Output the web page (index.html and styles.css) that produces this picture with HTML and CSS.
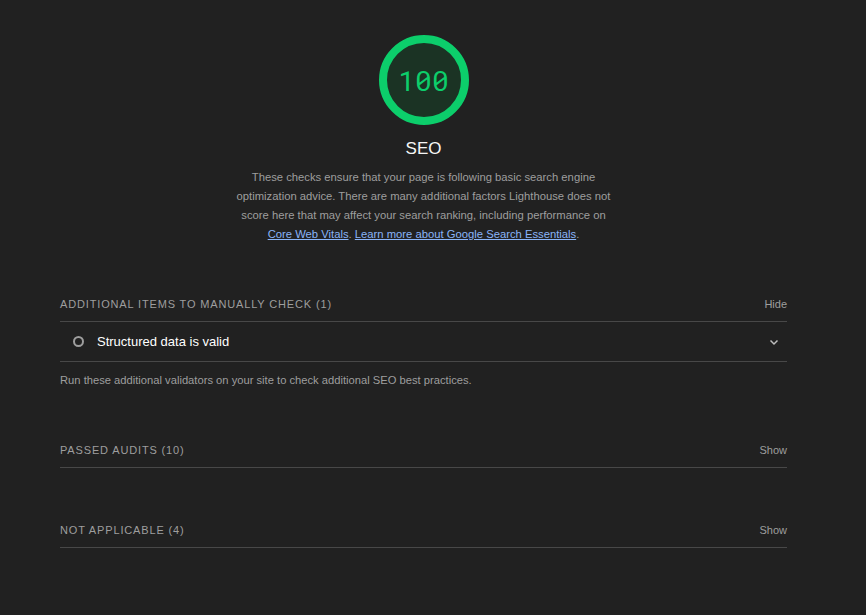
FILE: index.html
```html
<!DOCTYPE html>
<html>
<head>
<meta charset="utf-8">
<link rel="stylesheet" href="styles.css">
</head>
<body>
<div class="page">
  <div class="header">
    <div class="gauge">
      <svg width="96" height="96" viewBox="0 0 96 96">
        <circle cx="48" cy="48" r="41" fill="#1b3324" stroke="#0cce6b" stroke-width="8"/>
      </svg>
      <div class="gauge-num">100</div>
    </div>
    <div class="title">SEO</div>
    <p class="desc">These checks ensure that your page is following basic search engine optimization advice. There are many additional factors Lighthouse does not score here that may affect your search ranking, including performance on <a href="#">Core Web Vitals</a>. <a href="#">Learn more about Google Search Essentials</a>.</p>
  </div>

  <div class="group group-first">
    <div class="group-head">
      <span class="group-title">Additional items to manually check (1)</span>
      <span class="toggle">Hide</span>
    </div>
    <div class="audit">
      <span class="audit-icon"></span>
      <span class="audit-title">Structured data is valid</span>
      <svg class="chev" width="12" height="12" viewBox="0 0 12 12"><path d="M2.5 4.5 L6 8 L9.5 4.5" fill="none" stroke="#bdbdbd" stroke-width="1.5"/></svg>
    </div>
    <div class="group-desc">Run these additional validators on your site to check additional SEO best practices.</div>
  </div>

  <div class="group">
    <div class="group-head">
      <span class="group-title">Passed audits (10)</span>
      <span class="toggle">Show</span>
    </div>
  </div>

  <div class="group">
    <div class="group-head">
      <span class="group-title">Not applicable (4)</span>
      <span class="toggle">Show</span>
    </div>
  </div>
</div>
</body>
</html>
```
FILE: styles.css
```css
html, body {
  margin: 0;
  padding: 0;
  background: #212121;
}
body {
  font-family: "Liberation Sans", Arial, sans-serif;
  color: #e0e0e0;
}
.page {
  width: 727px;
  margin: 0 auto 0 60px;
  padding-top: 32px;
}
.header {
  display: flex;
  flex-direction: column;
  align-items: center;
}
.gauge {
  position: relative;
  width: 96px;
  height: 96px;
}
.gauge svg {
  display: block;
}
.gauge-num {
  position: absolute;
  left: 0;
  top: 0;
  width: 96px;
  height: 96px;
  display: flex;
  align-items: center;
  justify-content: center;
  font-family: "Roboto Mono", "DejaVu Sans Mono", "Liberation Mono", monospace;
  font-size: 28px;
  color: #0cce6b;
}
.title {
  margin-top: 11px;
  font-size: 17px;
  color: #f5f5f5;
  line-height: 20px;
}
.desc {
  margin: 9px 0 0;
  width: 390px;
  text-align: center;
  font-size: 11.25px;
  line-height: 19px;
  color: #9e9e9e;
}
.desc a {
  color: #8ab4f8;
  text-decoration: underline;
}
.group {
  margin-top: 46px;
}
.group-first {
  margin-top: 44px;
}
.group-head {
  display: flex;
  justify-content: space-between;
  align-items: center;
  height: 34px;
  border-bottom: 1px solid #484848;
  box-sizing: border-box;
  padding-bottom: 1px;
}
.group-title {
  text-transform: uppercase;
  font-size: 11px;
  letter-spacing: 0.85px;
  color: #9e9e9e;
}
.toggle {
  font-size: 11px;
  color: #9e9e9e;
}
.audit {
  display: flex;
  align-items: center;
  height: 40px;
  border-bottom: 1px solid #484848;
  padding-left: 13px;
  padding-right: 7px;
  box-sizing: border-box;
}
.audit-icon {
  width: 7px;
  height: 7px;
  border: 2px solid #9e9e9e;
  border-radius: 50%;
}
.audit-title {
  margin-left: 13px;
  font-size: 13px;
  color: #ffffff;
  flex: 1;
}
.chev {
  display: block;
}
.group-desc {
  margin-top: 10px;
  font-size: 11.2px;
  color: #9e9e9e;
  line-height: 16px;
}
```
